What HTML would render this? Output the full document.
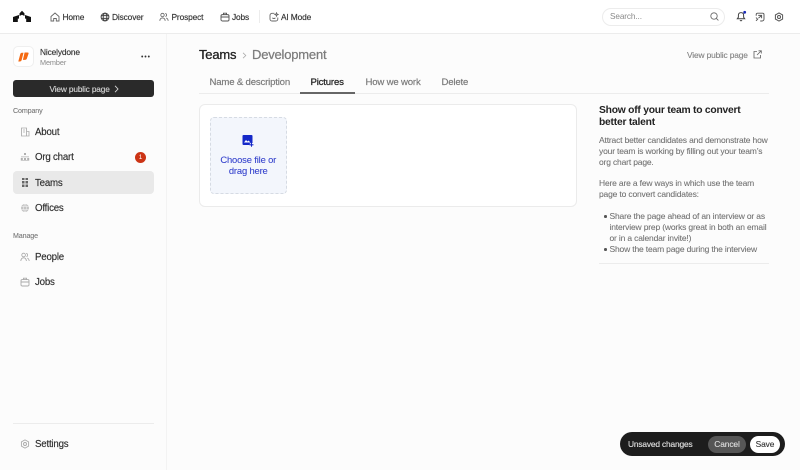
<!DOCTYPE html>
<html><head><meta charset="utf-8"><style>
*{box-sizing:border-box;margin:0;padding:0}
html,body{width:800px;height:470px;overflow:hidden;background:#fff;font-family:"Liberation Sans",sans-serif}
.a{position:absolute;white-space:nowrap}
.t{position:absolute;white-space:nowrap;line-height:16px;height:16px}
svg{position:absolute;fill:none}
.nav{font-size:8.4px;letter-spacing:-.15px;color:#333;-webkit-text-stroke:.15px #333}
.side{font-size:9.7px;letter-spacing:-.2px;color:#2e2e2e;-webkit-text-stroke:.15px #2e2e2e;margin-top:1px}
.sec{font-size:7.1px;letter-spacing:-.12px;color:#777;-webkit-text-stroke:.1px #777}
.tab{font-size:9.6px;letter-spacing:-.18px;color:#777;-webkit-text-stroke:.15px #777;margin-top:1px}
.p{font-size:8.5px;letter-spacing:-.17px;color:#6f6f6f;line-height:11px;height:11px;-webkit-text-stroke:.06px #6f6f6f}
</style></head><body>
<div class="a" style="left:0;top:0;width:800px;height:470px;background:#fcfcfc"></div>
<div class="a" style="left:0;top:0;width:800px;height:34px;background:#fff;border-bottom:1px solid #ececec"></div>
<div class="a" style="left:166px;top:34px;width:1px;height:436px;background:#f3f3f3"></div>

<svg style="left:12px;top:10px" width="20" height="13" viewBox="0 0 20 13"><path fill="#111" d="M7.500 3.400L10 .8 12.500 3.400V6L10 4.800 7.500 6ZM1 7L7 5V8.600H5.800V12H1ZM19 7L13 5V8.600H14.200V12H19Z"/></svg>

<svg style="left:50px;top:12px" width="10" height="10" viewBox="0 0 10 10" stroke="#666" stroke-width=".9"><path d="M1 4.500L5 1 9 4.500V9H6.300V6.500H3.700V9H1Z"/></svg>
<div class="t nav" style="left:62.500px;top:9px">Home</div>
<svg style="left:99.500px;top:12px" width="10" height="10" viewBox="0 0 10 10" stroke="#444" stroke-width="1"><circle cx="5" cy="5" r="3.900"/><ellipse cx="5" cy="5" rx="1.800" ry="3.900"/><path d="M1 3.600H9M1 6.400H9"/></svg>
<div class="t nav" style="left:112px;top:9px">Discover</div>
<svg style="left:159px;top:12px" width="10" height="10" viewBox="0 0 10 10" stroke="#666" stroke-width=".85"><circle cx="3.500" cy="3" r="1.700"/><path d="M.8 8.800C1 6.800 2 5.900 3.500 5.900S6 6.800 6.200 8.800M6.300 1.400A1.700 1.700 0 0 1 6.500 4.600M7 6C8.300 6.300 9 7.200 9.200 8.800"/></svg>
<div class="t nav" style="left:171.500px;top:9px">Prospect</div>
<svg style="left:219.500px;top:12px" width="10" height="10" viewBox="0 0 10 10" stroke="#555" stroke-width=".95"><rect x="1" y="2.600" width="8" height="6.400" rx="1.400"/><path d="M3.500 2.600V1.200H6.500V2.600M1 5H9"/></svg>
<div class="t nav" style="left:232px;top:9px">Jobs</div>
<div class="a" style="left:259px;top:10px;width:1px;height:13px;background:#ececec"></div>
<svg style="left:268.500px;top:12px" width="10" height="10" viewBox="0 0 10 10" stroke="#666" stroke-width=".9"><path d="M5.500 1.300H3A2 2 0 0 0 1 3.300V7A2 2 0 0 0 3 9H6.800A2 2 0 0 0 8.800 7V5.500M3.400 5.800C4.200 6.800 5.600 6.800 6.400 5.800M7.500 .8L8 2 9.200 2.500 8 3 7.500 4.200 7 3 5.800 2.500 7 2Z"/></svg>
<div class="t nav" style="left:281px;top:9px">AI Mode</div>

<div class="a" style="left:602px;top:8px;width:123px;height:17.500px;border:1px solid #ececec;border-radius:9px;background:#fff"></div>
<div class="t" style="left:610px;top:9px;font-size:8.200px;letter-spacing:-.1px;color:#8a8a8a">Search...</div>
<svg style="left:710px;top:12px" width="9" height="9" viewBox="0 0 9 9" stroke="#666" stroke-width=".85"><circle cx="4" cy="4" r="3.200"/><path d="M6.400 6.400L8.400 8.400"/></svg>
<svg style="left:736px;top:10px" width="11" height="12" viewBox="0 0 11 12" stroke="#444" stroke-width="1"><path d="M5 2.600C3.200 2.600 2.400 3.800 2.400 5.200V7.200L1.300 8.800H8.700L7.600 7.200V5.200C7.600 3.800 6.800 2.600 5 2.600ZM4 10.300C4.400 10.900 5.600 10.900 6 10.300"/><circle cx="8.700" cy="2.300" r="1.400" fill="#1a2bb8" stroke="none"/></svg>
<svg style="left:755px;top:12px" width="10" height="10" viewBox="0 0 10 10" stroke="#555" stroke-width=".95"><path d="M1.200 3.800V2.600A1.400 1.400 0 0 1 2.600 1.200H7.600A1.400 1.400 0 0 1 9 2.600V7A2 2 0 0 1 7 9H5.200M3.200 3.400H6.600V6.200M6.400 3.600L3.400 6.200M1 5.600L2.600 7.200 1 8.800"/></svg>
<svg style="left:774px;top:12px" width="10" height="10" viewBox="0 0 10 10" stroke="#555" stroke-width="1"><path d="M5 .9L8.600 2.900V7.100L5 9.100 1.400 7.100V2.900Z"/><circle cx="5" cy="5" r="1.500"/></svg>

<div class="a" style="left:13px;top:46px;width:21px;height:21px;background:#fff;border:1px solid #efefef;border-radius:5px"></div>
<svg style="left:17px;top:51px" width="13" height="12" viewBox="0 0 13 12"><path fill="#f56a12" d="M3.300 3Q3.700 1.800 4.900 1.800H6.500L4.600 9.300Q4.200 10.500 3 10.500H1.300ZM7.600 1.500H10.500Q11.900 1.500 11.500 2.700L9.800 7.800Q9.300 8.900 8 8.900H5.900Z"/></svg>
<div class="t" style="left:40px;top:44px;font-size:8.400px;letter-spacing:-.15px;color:#333;-webkit-text-stroke:.15px #333">Nicelydone</div>
<div class="t" style="left:40px;top:55px;font-size:7.300px;letter-spacing:-.1px;color:#8a8a8a">Member</div>
<svg style="left:141px;top:55px" width="9" height="3" viewBox="0 0 9 3"><circle cx="1.200" cy="1.500" r=".95" fill="#333"/><circle cx="4.500" cy="1.500" r=".95" fill="#333"/><circle cx="7.800" cy="1.500" r=".95" fill="#333"/></svg>

<div class="a" style="left:13px;top:80px;width:141px;height:17px;background:#2a2a2a;border-radius:3px"></div>
<div class="t" style="left:49.500px;top:81px;font-size:8.300px;letter-spacing:-.15px;color:#d8d8d8;-webkit-text-stroke:.12px #d8d8d8">View public page</div>
<svg style="left:114px;top:85px" width="5" height="8" viewBox="0 0 5 8" stroke="#d8d8d8" stroke-width=".9"><path d="M1 .8L4 4 1 7.200"/></svg>

<div class="t sec" style="left:13px;top:103px">Company</div>
<svg style="left:20px;top:127px" width="10" height="10" viewBox="0 0 10 10" stroke="#aaa" stroke-width=".85"><path d="M1.500 9V1H6.500V9ZM6.500 4.500H9V9H1.500M3 3H5M3 5H5"/></svg>
<div class="t side" style="left:35px;top:124px">About</div>
<svg style="left:20px;top:152px" width="10" height="10" viewBox="0 0 10 10"><path fill="#b0b0b0" d="M4 1H6V3H4ZM1 4.500H9V5.200H1ZM.8 6H2.800V8H.8ZM4 6H6V8H4ZM7.200 6H9.200V8H7.200ZM.8 8.400H9.200V9H.8Z"/></svg>
<div class="t side" style="left:35px;top:149px">Org chart</div>
<div class="a" style="left:135px;top:152px;width:11px;height:11px;border-radius:50%;background:#cc3415;color:#fff;font-size:6.500px;line-height:11px;text-align:center">1</div>
<div class="a" style="left:13px;top:171px;width:141px;height:23px;background:#e9e9e9;border-radius:4px"></div>
<svg style="left:22px;top:178px" width="6" height="9" viewBox="0 0 6 9"><path fill="#666" d="M0 0H2.500V2H0ZM3.500 0H6V2H3.500ZM0 3H2.500V5.500H0ZM3.500 3H6V5.500H3.500ZM0 6.500H2.500V9H0ZM3.500 6.500H6V9H3.500Z"/></svg>
<div class="t side" style="left:35px;top:175px">Teams</div>
<svg style="left:20px;top:203px" width="10" height="10" viewBox="0 0 10 10"><circle cx="5" cy="5" r="4" fill="#c4c4c4"/><path stroke="#eee" stroke-width=".6" d="M1 3.600H9M1 6.400H9M5 1C3 3.500 3 6.500 5 9M5 1C7 3.500 7 6.500 5 9"/></svg>
<div class="t side" style="left:35px;top:200px">Offices</div>

<div class="t sec" style="left:13px;top:228px">Manage</div>
<svg style="left:20px;top:252px" width="10" height="10" viewBox="0 0 10 10" stroke="#aaa" stroke-width=".85"><circle cx="3.600" cy="3" r="1.800"/><path d="M.8 9C1 6.800 2 5.800 3.600 5.800S6.200 6.800 6.400 9M6.200 1.300A1.800 1.800 0 0 1 6.500 4.700M7.200 6C8.400 6.400 9 7.400 9.200 9"/></svg>
<div class="t side" style="left:35px;top:249px">People</div>
<svg style="left:20px;top:277px" width="10" height="10" viewBox="0 0 10 10" stroke="#aaa" stroke-width=".9"><rect x="1" y="2.600" width="8" height="6.400" rx="1.200"/><path d="M3.500 2.600V1.200H6.500V2.600M1 5H9"/></svg>
<div class="t side" style="left:35px;top:274px">Jobs</div>

<div class="a" style="left:13px;top:423px;width:141px;height:1px;background:#ececec"></div>
<svg style="left:20px;top:438.500px" width="10" height="10" viewBox="0 0 10 10" stroke="#aaa" stroke-width=".9"><path d="M5 .9L8.600 2.900V7.100L5 9.100 1.400 7.100V2.900Z"/><circle cx="5" cy="5" r="1.500"/></svg>
<div class="t side" style="left:35px;top:436px">Settings</div>

<div class="t" style="left:199px;top:47px;font-size:13px;letter-spacing:-.2px;color:#222;-webkit-text-stroke:.3px #222">Teams</div>
<svg style="left:242px;top:52px" width="5" height="7" viewBox="0 0 5 7" stroke="#aaa" stroke-width=".8"><path d="M1 .8L3.800 3.500 1 6.200"/></svg>
<div class="t" style="left:252px;top:47px;font-size:13px;letter-spacing:-.2px;color:#7c7c7c;-webkit-text-stroke:.25px #7c7c7c">Development</div>
<div class="t" style="left:687px;top:47px;font-size:8.400px;letter-spacing:-.15px;color:#808080;-webkit-text-stroke:.1px #808080">View public page</div>
<svg style="left:753px;top:50px" width="9" height="9" viewBox="0 0 9 9" stroke="#666" stroke-width=".85"><path d="M4 1.500H1V8H7.500V5M5.500 .8H8.300V3.500M8 1L4 5"/></svg>

<div class="t tab" style="left:209.500px;top:74px">Name &amp; description</div>
<div class="t tab" style="left:310.500px;top:74px;color:#2a2a2a;-webkit-text-stroke:.3px #2a2a2a">Pictures</div>
<div class="t tab" style="left:365.500px;top:74px">How we work</div>
<div class="t tab" style="left:441.500px;top:74px">Delete</div>
<div class="a" style="left:199px;top:93px;width:570px;height:1px;background:#ececec"></div>
<div class="a" style="left:300px;top:92px;width:55px;height:1.500px;background:#666"></div>

<div class="a" style="left:199px;top:104px;width:378px;height:103px;background:#fff;border:1px solid #ebebeb;border-radius:6px"></div>
<div class="a" style="left:210px;top:117px;width:76.500px;height:76.500px;background:#f3f6fc;border:1px dashed #d6dbe3;border-radius:4px"></div>
<svg style="left:241px;top:134px" width="14" height="13" viewBox="0 0 14 13"><rect x="1.500" y="1" width="10" height="10" rx="1" fill="#1428c8"/><path fill="#fff" d="M3 8.500L5 6 6.500 7.500 7.500 6.500 9.500 8.500Z"/><path stroke="#fff" stroke-width="2.500" d="M10.500 9V13M8.500 11H13"/><path stroke="#1428c8" stroke-width="1.100" d="M10.500 8.800V12.700M8.500 10.800H12.500"/></svg>
<div class="a" style="left:210px;top:154px;width:76.500px;text-align:center;font-size:9.400px;letter-spacing:-.15px;line-height:11px;color:#3340cc;-webkit-text-stroke:.08px #3340cc">Choose file or<br>drag here</div>

<div class="t" style="left:599px;top:103px;font-size:10.300px;color:#222;letter-spacing:-.23px;font-weight:bold">Show off your team to convert</div>
<div class="t" style="left:599px;top:115px;font-size:10.300px;color:#222;letter-spacing:-.23px;font-weight:bold">better talent</div>
<div class="t p" style="left:599px;top:134.500px">Attract better candidates and demonstrate how</div>
<div class="t p" style="left:599px;top:145.500px">your team is working by filling out your team’s</div>
<div class="t p" style="left:599px;top:156.500px">org chart page.</div>
<div class="t p" style="left:599px;top:178px">Here are a few ways in which use the team</div>
<div class="t p" style="left:599px;top:189px">page to convert candidates:</div>
<div class="a" style="left:604px;top:215px;width:2.500px;height:2.500px;border-radius:50%;background:#555"></div>
<div class="t p" style="left:609.500px;top:211px">Share the page ahead of an interview or as</div>
<div class="t p" style="left:609.500px;top:222px">interview prep (works great in both an email</div>
<div class="t p" style="left:609.500px;top:233px">or in a calendar invite!)</div>
<div class="a" style="left:604px;top:248px;width:2.500px;height:2.500px;border-radius:50%;background:#555"></div>
<div class="t p" style="left:609.500px;top:244px">Show the team page during the interview</div>
<div class="a" style="left:599px;top:263px;width:170px;height:1px;background:#ececec"></div>

<div class="a" style="left:620px;top:432px;width:165px;height:23.500px;background:#1d1d1d;border-radius:12px"></div>
<div class="t" style="left:628px;top:435.500px;font-size:8.400px;letter-spacing:-.17px;color:#e0e0e0;-webkit-text-stroke:.12px #e0e0e0">Unsaved changes</div>
<div class="a" style="left:708px;top:435.500px;width:38px;height:17px;background:#565656;border-radius:9px;color:#e0e0e0;font-size:8.400px;letter-spacing:-.1px;line-height:17px;text-align:center;-webkit-text-stroke:.1px #e0e0e0">Cancel</div>
<div class="a" style="left:750px;top:435.500px;width:30px;height:17px;background:#fff;border-radius:9px;color:#333;font-size:8.400px;letter-spacing:-.1px;line-height:17px;text-align:center;-webkit-text-stroke:.12px #333">Save</div>
</body></html>
